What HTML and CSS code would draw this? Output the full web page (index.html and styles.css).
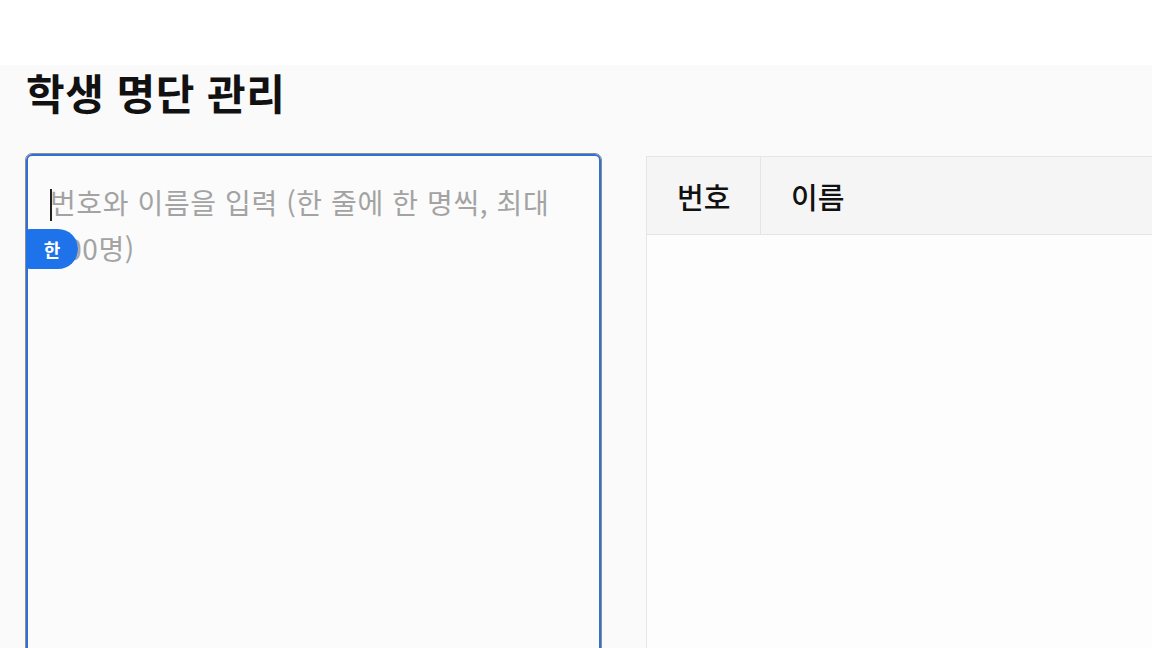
FILE: index.html
```html
<!DOCTYPE html>
<html lang="ko">
<head>
    <meta charset="UTF-8">
    <meta name="viewport" content="width=device-width, initial-scale=1.0">
    <title>학생 명단 관리</title>
    <link rel="stylesheet" href="styles.css">
</head>
<body>

    <div class="topbar"></div>

    <main class="page">
        <h1 class="title">학생 명단 관리</h1>

        <div class="columns">
            <div class="input-box">
                <div class="roster-input">
                    <span class="caret"></span><span class="placeholder">번호와 이름을 입력 (한 줄에 한 명씩, 최대 100명)</span>
                </div>
                <span class="ime-badge">한</span>
            </div>

            <table class="roster-table">
                <thead>
                    <tr>
                        <th class="col-num">번호</th>
                        <th>이름</th>
                    </tr>
                </thead>
                <tbody>
                    <tr><td colspan="2" class="empty"></td></tr>
                </tbody>
            </table>
        </div>
    </main>

</body>
</html>
```

FILE: styles.css
```css
body {
    margin: 0;
    height: 648px;
    overflow: hidden;
    font-family: "Noto Sans CJK KR", "Noto Sans", sans-serif;
    background-color: #fafafa;
    color: #111;
}

.topbar {
    height: 65px;
    background-color: #fff;
}

.page {
    padding: 0 0 0 25px;
}

.title {
    margin: 0 0 0 1px;
    font-size: 42px;
    line-height: 54px;
    font-weight: 700;
    letter-spacing: 0.5px;
}

.columns {
    display: grid;
    grid-template-columns: 577px 577px;
    gap: 44px;
    margin-top: 34px;
}

.input-box {
    position: relative;
}

.roster-input {
    box-sizing: border-box;
    height: 560px;
    padding: 25px 24px;
    border: 1px solid #8c8c8c;
    border-radius: 7px;
    box-shadow: inset 0 0 0 2px #2f6fd6;
    background-color: #fbfbfb;
    font-size: 28px;
    line-height: 46px;
    color: #a3a3a3;
    letter-spacing: 0.6px;
}

.caret {
    display: inline-block;
    width: 2px;
    height: 32px;
    margin-right: -2px;
    vertical-align: -7px;
    background-color: #222;
}

.ime-badge {
    position: absolute;
    left: 1px;
    top: 76px;
    width: 52px;
    height: 40px;
    border-radius: 4px 20px 20px 4px;
    background-color: #1f73ea;
    color: #fff;
    font-size: 18px;
    font-weight: 700;
    line-height: 40px;
    text-align: center;
}

.roster-table {
    align-self: start;
    margin-top: 3px;
    width: 100%;
    border-collapse: collapse;
    border: 1px solid #e6e6e6;
    background-color: #fdfdfd;
}

.roster-table th {
    box-sizing: border-box;
    height: 78px;
    padding: 0 30px;
    background-color: #f5f5f5;
    border-bottom: 1px solid #e4e4e4;
    font-size: 29px;
    font-weight: 500;
    text-align: left;
    white-space: nowrap;
}

.roster-table th.col-num {
    width: 114px;
    padding-right: 0;
    border-right: 1px solid #e4e4e4;
}

.roster-table td.empty {
    height: 420px;
}
```
